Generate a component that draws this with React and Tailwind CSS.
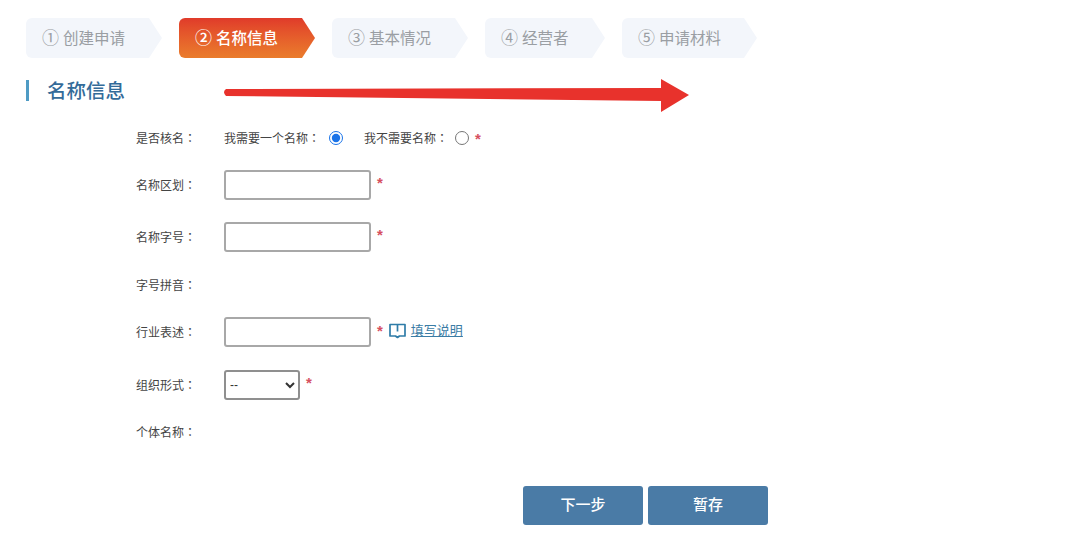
const steps = [
  { no: '①', name: '创建申请', width: 'w-[136px]' },
  { no: '②', name: '名称信息', width: 'w-[136px]', active: true },
  { no: '③', name: '基本情况', width: 'w-[136px]' },
  { no: '④', name: '经营者', width: 'w-[120px]' },
  { no: '⑤', name: '申请材料', width: 'w-[135px]' },
]

const Star = ({ className = '' }) => (
  <span className={`text-[15px] font-bold leading-none text-[#d6505f] ${className}`}>*</span>
)

// the colon sits in the middle of its cell in the reference, as in the TC font
const Colon = () => <span className="font-['Noto_Sans_CJK_TC',sans-serif]">：</span>

const Row = ({ label, className = '', children }) => (
  <div className={`flex h-[30px] items-center ${className}`}>
    <span className="mt-px w-[88px] shrink-0 whitespace-nowrap text-[12px] text-[#444]">
      {label}
      <Colon />
    </span>
    {children}
  </div>
)

const TextBox = () => (
  <input
    type="text"
    className="h-[30px] w-[147px] rounded-[3px] border-2 border-[#a8a8a8] bg-white outline-none"
  />
)

const App = () => {
  return (
    <div className="relative h-[550px] w-[1080px] overflow-hidden bg-white pt-[18px] font-['Liberation_Sans','Noto_Sans_CJK_SC',sans-serif]">
      {/* Steps */}
      <div className="ml-[26px] flex gap-[17px]">
        {steps.map((step) => (
          <div
            key={step.name}
            className={`flex h-10 items-center rounded-l-[6px] pl-4 [clip-path:polygon(0_0,calc(100%-13px)_0,100%_50%,calc(100%-13px)_100%,0_100%)] ${step.width} ${
              step.active
                ? 'bg-linear-to-b from-[#e03a2a] to-[#ea7c2c] font-medium text-white'
                : 'bg-[#f3f6fb] text-[#9a9ea3]'
            }`}
          >
            <span className="mt-[2px] w-[21px] text-[17px]">{step.no}</span>
            <span className="mt-[2px] text-[15.5px]">{step.name}</span>
          </div>
        ))}
      </div>

      {/* Section title */}
      <div className="ml-[26px] mt-[22px] flex h-[21px] items-center border-l-[3px] border-[#4f9bc4] pl-[18px] text-[19.5px] font-medium text-[#336b99]">
        <span className="mt-[2px]">名称信息</span>
      </div>

      {/* Form */}
      <div className="ml-[136px] mt-[22px] flex flex-col">
        <Row label="是否核名">
          <span className="mt-px w-[96px] shrink-0 whitespace-nowrap text-[12px] text-[#444]">
            我需要一个名称
            <Colon />
          </span>
          <input type="radio" name="need" defaultChecked className="ml-[9px] size-[14px] accent-[#1a73e8]" />
          <span className="ml-[21px] mt-px w-[84px] shrink-0 whitespace-nowrap text-[12px] text-[#444]">
            我不需要名称
            <Colon />
          </span>
          <input type="radio" name="need" className="ml-[7px] size-[14px]" />
          <Star className="ml-[6px]" />
        </Row>
        <Row label="名称区划" className="mt-[17px]">
          <TextBox />
          <Star className="ml-[6px] -mt-[6px]" />
        </Row>
        <Row label="名称字号" className="mt-[22px]">
          <TextBox />
          <Star className="ml-[6px] -mt-[6px]" />
        </Row>
        <Row label="字号拼音" className="mt-[18px]" />
        <Row label="行业表述" className="mt-[17px]">
          <TextBox />
          <Star className="ml-[6px] -mt-[4px]" />
          <svg
            className="ml-[6px] -mt-[3px]"
            width="17"
            height="16"
            viewBox="0 0 17 16"
            fill="none"
            stroke="#2f7ca8"
            strokeWidth="1.7"
          >
            <path d="M1 1.5h15v11.5h-5.5l-2 1.5-2-1.5H1z" strokeLinejoin="round" />
            <path d="M8.5 2v6.5" />
          </svg>
          <a href="#" className="ml-[5px] -mt-[3px] text-[13px] text-[#3a7ca5] underline">
            填写说明
          </a>
        </Row>
        <Row label="组织形式" className="mt-[23px]">
          <select className="h-[30px] w-[76px] rounded-[3px] border-2 border-[#8f8f8f] bg-white text-[12px] text-[#333]">
            <option>--</option>
          </select>
          <Star className="ml-[6px] -mt-[6px]" />
        </Row>
        <Row label="个体名称" className="mt-[17px]" />
      </div>

      {/* Buttons */}
      <div className="ml-[523px] mt-[39px] flex gap-[5px]">
        <button className="h-[39px] w-[120px] rounded-[3px] bg-[#4a7ba6] text-[15px] font-medium text-white">
          下一步
        </button>
        <button className="h-[39px] w-[120px] rounded-[3px] bg-[#4a7ba6] text-[15px] font-medium text-white">
          暂存
        </button>
      </div>

      {/* Red annotation arrow drawn over the page */}
      <svg className="absolute left-0 top-0" width="1080" height="550" fill="none">
        <path
          d="M226 89 L661 88 L661 79 L689 95 L661 112 L661 101 L226 96 Q222 92 226 89 Z"
          fill="#e8322c"
        />
      </svg>
    </div>
  )
}

export default App
